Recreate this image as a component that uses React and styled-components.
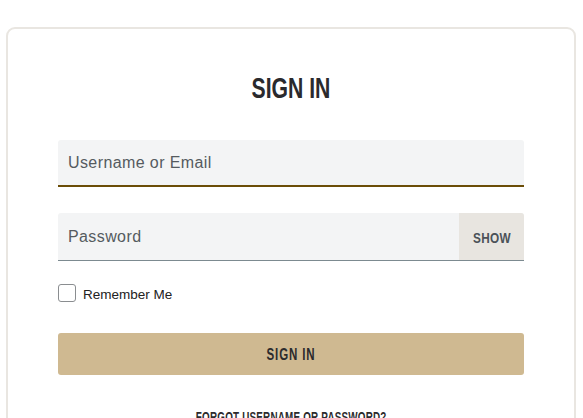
import React from "react";
import styled, { createGlobalStyle } from "styled-components";

const Global = createGlobalStyle`
  html, body { margin: 0; padding: 0; background: #fff; }
  body { font-family: "Liberation Sans", Arial, sans-serif; overflow: hidden; }
  * { box-sizing: border-box; }
`;

const Narrow = styled.span`
  display: inline-block;
  font-family: "Liberation Sans", Arial, sans-serif;
  font-weight: 700;
  transform: scaleX(${(p) => p.$sx || 0.74});
  transform-origin: center;
  white-space: nowrap;
`;

const Page = styled.div`
  padding: 27px 7px 0 6px;
`;

const Card = styled.div`
  border: 2px solid #e9e6e1;
  border-radius: 9px;
  padding: 44px 50px 40px;
  min-height: 420px;
`;

const Title = styled.h1`
  margin: 0 0 37px;
  text-align: center;
  font-size: 29px;
  line-height: 30px;
  font-weight: 700;
  color: #2a2a2d;
`;

const Field = styled.div`
  display: flex;
  height: ${(p) => p.$h}px;
  background: #f3f4f5;
  border-bottom: ${(p) => (p.$active ? "2px solid #6b4d07" : "1px solid #7c8a90")};
  border-radius: 3px 3px 0 0;
  margin-bottom: ${(p) => p.$mb}px;
`;

const Input = styled.input`
  flex: 1;
  min-width: 0;
  border: none;
  outline: none;
  background: transparent;
  padding: 0 10px;
  font-family: "Liberation Sans", Arial, sans-serif;
  font-size: 16px;
  letter-spacing: 0.4px;
  color: #333;
  &::placeholder { color: #555b60; }
`;

const ShowButton = styled.button`
  width: 65px;
  border: none;
  background: #e8e5e0;
  border-radius: 0 3px 0 0;
  font-size: 15.5px;
  letter-spacing: 0.4px;
  color: #4b5258;
  padding: 3px 0 0;
`;

const CheckRow = styled.label`
  display: flex;
  align-items: center;
  gap: 7px;
  margin-bottom: 31px;
  font-size: 13.5px;
  color: #222;
`;

const Box = styled.span`
  width: 18px;
  height: 18px;
  border: 1px solid #8a8d90;
  border-radius: 3px;
  background: #fff;
`;

const LabelText = styled.span`
  padding-top: 4px;
`;

const Primary = styled.button`
  display: block;
  width: 100%;
  height: 42px;
  border: none;
  border-radius: 3px;
  background: #cfb991;
  font-size: 16px;
  letter-spacing: 1.2px;
  color: #2b2b2d;
  margin-bottom: 34px;
  padding: 2px 0 0;
`;

const Forgot = styled.a`
  display: block;
  text-align: center;
  font-size: 14.5px;
  letter-spacing: 0.3px;
  color: #2b2b2d;
  text-decoration: none;
`;

export default function App() {
  return (
    <Page>
      <Global />
      <Card>
        <Title>
          <Narrow $sx={0.73}>SIGN IN</Narrow>
        </Title>
        <Field $h={47} $active $mb={26}>
          <Input placeholder="Username or Email" autoFocus />
        </Field>
        <Field $h={48} $mb={22}>
          <Input type="password" placeholder="Password" />
          <ShowButton>
            <Narrow $sx={0.76}>SHOW</Narrow>
          </ShowButton>
        </Field>
        <CheckRow>
          <Box />
          <LabelText>Remember Me</LabelText>
        </CheckRow>
        <Primary>
          <Narrow $sx={0.72}>SIGN IN</Narrow>
        </Primary>
        <Forgot href="#">
          <Narrow $sx={0.68}>FORGOT USERNAME OR PASSWORD?</Narrow>
        </Forgot>
      </Card>
    </Page>
  );
}
